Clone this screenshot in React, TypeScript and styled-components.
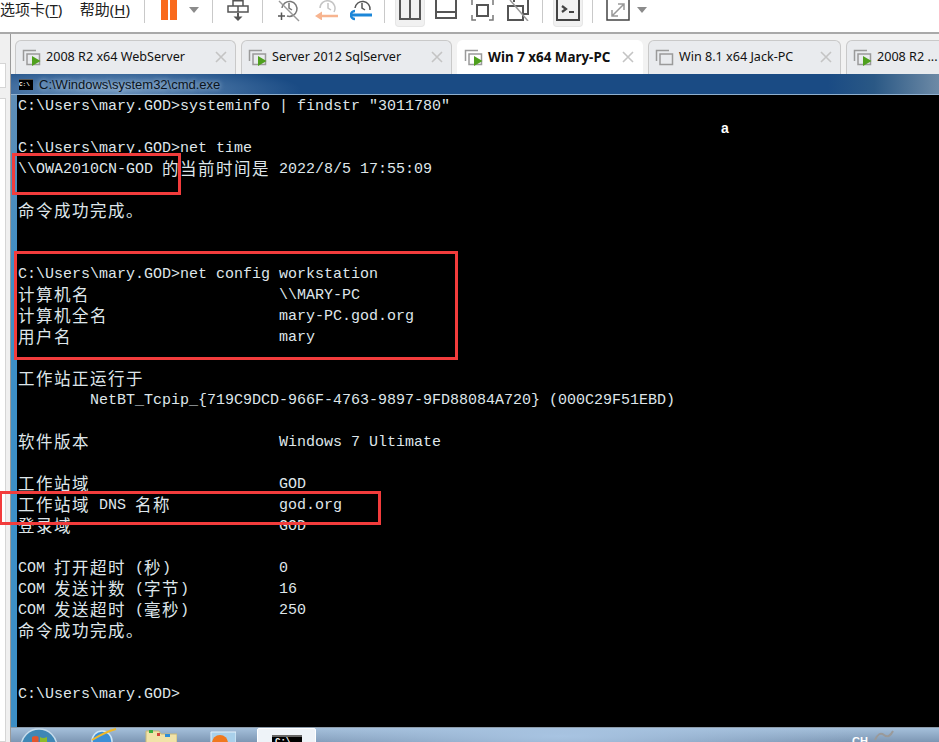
import React from "react";
import styled, { createGlobalStyle } from "styled-components";

const GlobalStyle = createGlobalStyle`
  html, body {
    margin: 0;
    padding: 0;
    background: #fff;
  }
`;

const Page = styled.div`
  position: relative;
  width: 939px;
  height: 742px;
  overflow: hidden;
  display: flex;
  flex-direction: column;
  font-family: "Noto Sans", "Noto Sans CJK SC", sans-serif;
`;

/* top toolbar */
const Toolbar = styled.div`
  height: 32px;
  flex: none;
  display: flex;
  align-items: flex-start;
  background: #fff;
  border-bottom: 2px solid #a9a9a9;
  overflow: hidden;
`;
const MenuGroup = styled.div`
  width: 130px;
  flex: none;
  display: flex;
  justify-content: space-between;
`;
const MenuItem = styled.span`
  font-size: 15px;
  line-height: 18px;
  color: #222;
  white-space: nowrap;
  & u {
    text-underline-offset: 2px;
  }
`;
const ToolSep = styled.div<{ $ml: number }>`
  margin-left: ${(p) => p.$ml}px;
  width: 1px;
  height: 23px;
  background: #c9c9c9;
`;
const ToolIcon = styled.div<{ $ml: number; $w: number }>`
  margin-left: ${(p) => p.$ml}px;
  width: ${(p) => p.$w}px;
  height: 24px;
  flex: none;
  & svg {
    display: block;
  }
`;
const ActiveTool = styled.div<{ $ml: number; $w: number }>`
  margin-left: ${(p) => p.$ml}px;
  width: ${(p) => p.$w}px;
  height: 27px;
  flex: none;
  display: flex;
  justify-content: center;
  background: #f1f1f1;
  border: 1px solid #e6e6e6;
  border-top: 0;
  box-sizing: border-box;
  border-radius: 0 0 4px 4px;
`;
const Caret = styled.div<{ $ml: number }>`
  margin-left: ${(p) => p.$ml}px;
  margin-top: 7px;
  width: 0;
  height: 0;
  border-left: 5px solid transparent;
  border-right: 5px solid transparent;
  border-top: 6px solid #8b8b8b;
`;

/* body under the toolbar */
const Body = styled.div`
  flex: 1;
  min-height: 0;
  display: flex;
`;
const Sidebar = styled.div`
  width: 10px;
  flex: none;
  background: #f0f0f0;
  padding-top: 29px;
  display: flex;
  flex-direction: column;
  gap: 10px;
  box-sizing: border-box;
`;
const SideBox = styled.div<{ $grow?: boolean }>`
  width: 6px;
  height: 25px;
  flex: ${(p) => (p.$grow ? 1 : "none")};
  background: #fff;
  border: 1px solid #d5d5d5;
  border-left: 0;
  box-sizing: border-box;
`;
const VmPane = styled.div`
  flex: 1;
  min-width: 0;
  display: flex;
  flex-direction: column;
  border-left: 1px solid #9a9a9a;
`;

/* tabs */
const TabStrip = styled.div`
  height: 40px;
  flex: none;
  box-sizing: border-box;
  padding: 6px 0 0 4px;
  display: flex;
  gap: 5px;
  background: #f2f2f2;
  overflow: hidden;
`;
const Tab = styled.div<{ $w: number; $active?: boolean }>`
  width: ${(p) => p.$w}px;
  flex: none;
  box-sizing: border-box;
  height: 34px;
  display: flex;
  align-items: center;
  padding: 0 8px 2px 6px;
  background: ${(p) => (p.$active ? "#fff" : "#e9ebee")};
  border: 1px solid ${(p) => (p.$active ? "#fff" : "#c9c9c9")};
  border-bottom: 0;
  border-radius: 6px 6px 0 0;
`;
const TabIcon = styled.svg`
  flex: none;
  display: block;
`;
const TabTitle = styled.span<{ $active?: boolean }>`
  flex: 1;
  margin-left: 5px;
  font-size: ${(p) => (p.$active ? 13.4 : 12.6)}px;
  font-weight: ${(p) => (p.$active ? 700 : 400)};
  color: #111;
  white-space: nowrap;
`;
const TabClose = styled.svg`
  flex: none;
  display: block;
`;

/* guest desktop */
const GuestTitle = styled.div`
  height: 21px;
  flex: none;
  box-sizing: border-box;
  padding-left: 8px;
  display: flex;
  align-items: center;
  gap: 6px;
  background: radial-gradient(ellipse 190px 26px at 100px 16px, #6f96be 0%, rgba(111, 150, 190, 0) 100%),
    linear-gradient(90deg, #1a4b84 0%, #1a4b84 88%, #2a5885 93%, #6d8aa6 100%);
  border-bottom: 1px solid #8fb0cf;
`;
const CmdGlyph = styled.div`
  width: 14px;
  height: 10px;
  background: #000;
  border-top: 1px solid #555;
  color: #fff;
  font: 700 6px/9px "Liberation Mono", monospace;
  text-align: left;
  overflow: hidden;
`;
const TitleText = styled.span`
  font-family: "Liberation Sans", sans-serif;
  font-size: 13px;
  color: #0b1420;
  text-shadow: 0 0 5px rgba(225, 238, 250, 0.8);
  white-space: nowrap;
`;
const ConsoleFrame = styled.div`
  flex: 1;
  min-height: 0;
  display: flex;
  background: linear-gradient(180deg, #5f8db5 0%, #3d8fc6 30%, #3d8fc6 100%);
  padding-left: 6px;
`;
const Console = styled.div`
  flex: 1;
  min-width: 0;
  background: #000;
  padding: 1px 0 0 1px;
  font-family: "Liberation Mono", monospace;
  font-size: 15px;
  color: #dfe6ea;
`;
const Line = styled.div`
  height: 21px;
  line-height: 21px;
  white-space: pre;
`;
const Cjk = styled.span`
  font-family: "Noto Sans CJK SC", sans-serif;
  font-size: 16.5px;
  line-height: 0;
  letter-spacing: 1.5px;
  vertical-align: -2px;
`;

/* guest taskbar */
const Taskbar = styled.div`
  height: 15px;
  flex: none;
  box-sizing: border-box;
  display: flex;
  align-items: flex-start;
  overflow: hidden;
  border-top: 1px solid #8d9cab;
  background: radial-gradient(ellipse 300px 30px at 550px 8px, #a8c4e2 0%, rgba(168, 196, 226, 0) 100%),
    linear-gradient(180deg, #a5c0db 0%, #7d97b4 100%);
`;
const TaskIcon = styled.div<{ $ml: number; $w: number }>`
  margin-left: ${(p) => p.$ml}px;
  width: ${(p) => p.$w}px;
  flex: none;
  & svg {
    display: block;
  }
`;
const ActiveTask = styled.div<{ $ml: number }>`
  margin-left: ${(p) => p.$ml}px;
  width: 59px;
  height: 15px;
  flex: none;
  box-sizing: border-box;
  padding: 6px 0 0 14px;
  background: #eef3f8;
  border: 1px solid #fff;
  border-radius: 2px 2px 0 0;
`;
const TaskCmd = styled.div`
  width: 30px;
  height: 10px;
  background: #000;
  border-top: 2px solid #666;
  color: #fff;
  font: 700 9px/10px "Liberation Mono", monospace;
  padding-left: 3px;
  box-sizing: border-box;
`;
const TrayText = styled.span<{ $ml: number }>`
  margin-left: ${(p) => p.$ml}px;
  margin-top: 6px;
  font: 700 11px/14px "Liberation Sans", sans-serif;
  color: #fff;
`;

/* things lying over the picture */
const Annotation = styled.div<{ $x: number; $y: number; $w: number; $h: number }>`
  position: absolute;
  left: ${(p) => p.$x}px;
  top: ${(p) => p.$y}px;
  width: ${(p) => p.$w}px;
  height: ${(p) => p.$h}px;
  box-sizing: border-box;
  border: 3px solid #f23c3c;
`;
const Cursor = styled.span`
  position: absolute;
  left: 721px;
  top: 120px;
  font: 700 14px/16px "Liberation Sans", sans-serif;
  color: #fff;
`;

function ConsoleLine({ text }: { text: string }) {
  const parts = text.split(/([\u3000-\u9fff]+)/);
  return (
    <Line>
      {parts.map((part, i) => (i % 2 ? <Cjk key={i}>{part}</Cjk> : part))}
      {text === "" ? " " : null}
    </Line>
  );
}

function VmTabIcon({ running }: { running: boolean }) {
  return (
    <TabIcon width="19" height="18" viewBox="0 0 19 18">
      <path d="M14 2.5H1.5V13" fill="none" stroke="#9a9a9a" strokeWidth="1.5" />
      <path d="M5 16.5V6H17.5V16.5Z" fill="none" stroke="#9a9a9a" strokeWidth="1.5" />
      {running ? <path d="M10 8L18.5 13L10 18Z" fill="#4fa01e" /> : null}
    </TabIcon>
  );
}

function CloseIcon() {
  return (
    <TabClose width="12" height="12" viewBox="0 0 12 12">
      <path d="M1 1L11 11M11 1L1 11" stroke="#c4c4c4" strokeWidth="1.6" />
    </TabClose>
  );
}

const tabs = [
  { title: "2008 R2 x64 WebServer", w: 221, running: true },
  { title: "Server 2012 SqlServer", w: 211, running: true },
  { title: "Win 7 x64 Mary-PC", w: 186, running: true, active: true },
  { title: "Win 8.1 x64 Jack-PC", w: 193, running: false },
  { title: "2008 R2 ...", w: 120, running: true },
];

const lines = [
  "C:\\Users\\mary.GOD>systeminfo | findstr \"3011780\"",
  "",
  "C:\\Users\\mary.GOD>net time",
  "\\\\OWA2010CN-GOD 的当前时间是 2022/8/5 17:55:09",
  "",
  "命令成功完成。",
  "",
  "",
  "C:\\Users\\mary.GOD>net config workstation",
  "计算机名                     \\\\MARY-PC",
  "计算机全名                   mary-PC.god.org",
  "用户名                       mary",
  "",
  "工作站正运行于",
  "        NetBT_Tcpip_{719C9DCD-966F-4763-9897-9FD88084A720} (000C29F51EBD)",
  "",
  "软件版本                     Windows 7 Ultimate",
  "",
  "工作站域                     GOD",
  "工作站域 DNS 名称            god.org",
  "登录域                       GOD",
  "",
  "COM 打开超时 (秒)            0",
  "COM 发送计数 (字节)          16",
  "COM 发送超时 (毫秒)          250",
  "命令成功完成。",
  "",
  "",
  "C:\\Users\\mary.GOD>",
];

export default function App() {
  return (
    <Page>
      <GlobalStyle />
      <Toolbar>
        <MenuGroup>
          <MenuItem>
            选项卡(<u>T</u>)
          </MenuItem>
          <MenuItem>
            帮助(<u>H</u>)
          </MenuItem>
        </MenuGroup>
        <ToolSep $ml={14} />
        <ToolIcon $ml={16} $w={16}>
          <svg width="16" height="20" viewBox="0 0 16 20">
            <path d="M0 0H7V20H0ZM9 0H16V20H9Z" fill="#f96a1c" />
          </svg>
        </ToolIcon>
        <Caret $ml={12} />
        <ToolSep $ml={13} />
        <ToolIcon $ml={14} $w={22}>
          <svg width="22" height="22" viewBox="0 0 22 22" fill="none" stroke="#555" strokeWidth="1.5">
            <path d="M6 .7H16V6H6ZM1 6H21V12H1ZM11 6V12" />
            <path d="M11 13V18" strokeWidth="2" />
            <path d="M6.500 16.500H15.500L11 21Z" fill="#555" stroke="none" />
          </svg>
        </ToolIcon>
        <ToolSep $ml={13} />
        <ToolIcon $ml={14} $w={23}>
          <svg width="23" height="22" viewBox="0 0 23 22" fill="none" stroke="#777" strokeWidth="1.5">
            <path d="M5 8A7.500 7.500 0 1 1 10 16" />
            <path d="M12 3V8L15 10" />
            <path d="M1 16H8M4.500 12.500V20" stroke="#555" />
            <path d="M2 1L22 21" stroke="#999" />
          </svg>
        </ToolIcon>
        <ToolIcon $ml={14} $w={24}>
          <svg width="24" height="20" viewBox="0 0 24 20" fill="none" stroke="#c4c4c4" strokeWidth="1.5">
            <path d="M6 8A7.500 7.500 0 1 1 20 12" />
            <path d="M14 3V8L17 10" />
            <path d="M24 16H6" stroke="#f7b48f" strokeWidth="2.500" />
            <path d="M8 11.500L1 16L8 20.500Z" fill="#f7b48f" stroke="none" />
          </svg>
        </ToolIcon>
        <ToolIcon $ml={12} $w={23}>
          <svg width="23" height="21" viewBox="0 0 23 21" fill="none" stroke="#555" strokeWidth="1.5">
            <path d="M5 8A7.500 7.500 0 1 1 20 10" />
            <path d="M12 3V8L15 10" />
            <path d="M2 15H22" stroke="#1b86d8" strokeWidth="3" />
            <path d="M5 11A4 4 0 0 0 5 19" stroke="#1b86d8" strokeWidth="2.500" />
          </svg>
        </ToolIcon>
        <ToolSep $ml={11} />
        <ActiveTool $ml={10} $w={30}>
          <svg width="22" height="20" viewBox="0 0 22 20" fill="none" stroke="#555" strokeWidth="2">
            <path d="M1 0V19H21V0M11 0V19" />
          </svg>
        </ActiveTool>
        <ToolIcon $ml={10} $w={22}>
          <svg width="22" height="19" viewBox="0 0 22 19" fill="none" stroke="#555" strokeWidth="2">
            <path d="M1 0V18H21V0M1 12H21" />
          </svg>
        </ToolIcon>
        <ToolIcon $ml={14} $w={23}>
          <svg width="23" height="21" viewBox="0 0 23 21" fill="none" stroke="#555" strokeWidth="1.5">
            <path d="M6 5H17V16H6Z" strokeWidth="2" />
            <path d="M1 0V5M22 0V5M1 15V20H5M18 20H22V15" stroke="#777" />
          </svg>
        </ToolIcon>
        <ToolIcon $ml={13} $w={23}>
          <svg width="23" height="21" viewBox="0 0 23 21" fill="none" stroke="#555" strokeWidth="2">
            <path d="M1 6H16V20H1ZM7 0V2M21 0V14H17" />
            <path d="M3 0L21 21" stroke="#999" strokeWidth="1.500" />
          </svg>
        </ToolIcon>
        <ToolSep $ml={12} />
        <ActiveTool $ml={10} $w={30}>
          <svg width="24" height="21" viewBox="0 0 24 21" fill="none" stroke="#444" strokeWidth="2">
            <path d="M1 0V20H23V0" />
            <path d="M6 6L10 9L6 12" strokeWidth="2.200" />
            <path d="M13 12H18" />
          </svg>
        </ActiveTool>
        <ToolSep $ml={9} />
        <ToolIcon $ml={13} $w={24}>
          <svg width="24" height="21" viewBox="0 0 24 21" fill="none" stroke="#444" strokeWidth="1.5">
            <path d="M1 0V20H23V0" />
            <path d="M6 16L18 4M12 4H18V10M6 10V16H12" stroke="#999" />
          </svg>
        </ToolIcon>
        <Caret $ml={7} />
      </Toolbar>
      <Body>
        <Sidebar>
          <SideBox />
          <SideBox $grow />
        </Sidebar>
        <VmPane>
          <TabStrip>
            {tabs.map((tab) => (
              <Tab key={tab.title} $w={tab.w} $active={tab.active}>
                <VmTabIcon running={tab.running} />
                <TabTitle $active={tab.active}>{tab.title}</TabTitle>
                <CloseIcon />
              </Tab>
            ))}
          </TabStrip>
          <GuestTitle>
            <CmdGlyph>C:\</CmdGlyph>
            <TitleText>C:\Windows\system32\cmd.exe</TitleText>
          </GuestTitle>
          <ConsoleFrame>
            <Console>
              {lines.map((line, i) => (
                <ConsoleLine key={i} text={line} />
              ))}
            </Console>
          </ConsoleFrame>
          <Taskbar>
            <TaskIcon $ml={9} $w={38}>
              <svg width="38" height="15" viewBox="0 0 38 15">
                <circle cx="19" cy="19" r="18" fill="#3f87b5" stroke="#c6dcec" strokeWidth="1.500" />
                <path d="M12 9Q16 7 18.500 9V14H12Z" fill="#e2552d" />
                <path d="M20 9Q23 11 27 9V14H20Z" fill="#8cbb2a" />
              </svg>
            </TaskIcon>
            <TaskIcon $ml={31} $w={28}>
              <svg width="28" height="15" viewBox="0 0 28 15">
                <circle cx="13" cy="13" r="10" fill="#3c8fd6" stroke="#cfe6f5" strokeWidth="1.500" />
                <path d="M3 12Q16 4 27 1" fill="none" stroke="#f0b92a" strokeWidth="2" />
              </svg>
            </TaskIcon>
            <TaskIcon $ml={28} $w={32}>
              <svg width="32" height="15" viewBox="0 0 32 15">
                <path d="M1 3H14L16 6H32V15H1Z" fill="#f1e3a8" stroke="#c8b878" />
                <path d="M4 2H8V5H4Z" fill="#3cb043" />
                <path d="M12 5H15V8H12Z" fill="#d6453b" />
                <path d="M20 6H25V9H20Z" fill="#2f8fd8" />
              </svg>
            </TaskIcon>
            <TaskIcon $ml={33} $w={26}>
              <svg width="26" height="15" viewBox="0 0 26 15">
                <path d="M1 4H26V15H1Z" fill="#a9d0ea" stroke="#e5f1fa" />
                <circle cx="10" cy="15" r="8" fill="#f0781e" />
              </svg>
            </TaskIcon>
            <ActiveTask $ml={21}>
              <TaskCmd>C:\</TaskCmd>
            </ActiveTask>
            <TrayText $ml={536}>CH</TrayText>
            <TaskIcon $ml={6} $w={20}>
              <svg width="20" height="15" viewBox="0 0 20 15">
                <path d="M1 12Q5 3 10 7T19 3" fill="none" stroke="#9a9a9a" strokeWidth="2" />
              </svg>
            </TaskIcon>
          </Taskbar>
        </VmPane>
      </Body>
      <Annotation $x={12} $y={153} $w={169} $h={42} />
      <Annotation $x={14} $y={251} $w={444} $h={109} />
      <Annotation $x={-1} $y={491} $w={382} $h={34} />
      <Cursor>a</Cursor>
    </Page>
  );
}
